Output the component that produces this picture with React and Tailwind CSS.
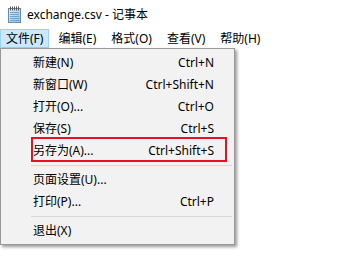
const font = { fontFamily: '"Noto Sans", "Noto Sans CJK SC", sans-serif' }

const NotepadIcon = () => (
  <svg width="15" height="17" viewBox="0 0 15 17">
    <defs>
      <linearGradient id="pad" x1="0" y1="0" x2="1" y2="1">
        <stop offset="0" stopColor="#e4f2fc" />
        <stop offset="1" stopColor="#8fc0e4" />
      </linearGradient>
    </defs>
    <rect x="1.5" y="2.5" width="12" height="14" fill="url(#pad)" stroke="#5b8db8" />
    {[3, 5, 7, 9, 11].map((x) => (
      <rect key={x} x={x} y="0.5" width="1" height="4" fill="#555" />
    ))}
    {[6, 8, 10, 12, 14].map((y) => (
      <line key={y} x1="3" y1={y + 0.5} x2="12" y2={y + 0.5} stroke="#6fa3cf" strokeWidth="1" />
    ))}
  </svg>
)

const items = [
  { label: '新建(N)', key: 'Ctrl+N' },
  { label: '新窗口(W)', key: 'Ctrl+Shift+N' },
  { label: '打开(O)...', key: 'Ctrl+O' },
  { label: '保存(S)', key: 'Ctrl+S' },
  { label: '另存为(A)...', key: 'Ctrl+Shift+S', marked: true },
  'sep',
  { label: '页面设置(U)...', key: '' },
  { label: '打印(P)...', key: 'Ctrl+P' },
  'sep',
  { label: '退出(X)', key: '' }
]

const App = () => {
  return (
    <div className="relative w-[363px] h-[266px] bg-white text-black overflow-hidden text-[12px]" style={font}>
      {/* Title bar */}
      <div className="flex items-center h-[29px] pl-[7px] gap-[5px]">
        <NotepadIcon />
        <span className="text-[12px] leading-none">exchange.csv - 记事本</span>
      </div>

      {/* Menu bar */}
      <div className="flex h-[19px] items-stretch gap-[3px]">
        {['文件(F)', '编辑(E)', '格式(O)', '查看(V)', '帮助(H)'].map((m, i) => (
          <div
            key={m}
            className={
              i === 0
                ? 'flex items-center px-[5px] border border-[#99d1ff] bg-[#cce8ff]'
                : 'flex items-center px-[5px] border border-transparent'
            }
          >
            {m}
          </div>
        ))}
      </div>

      {/* File menu */}
      <div className="absolute left-0 top-[48px] w-[235px] border border-[#999999] bg-[#f2f2f2] pt-[3px] pb-[2px] shadow-[2px_2px_3px_rgba(0,0,0,0.4)]">
        {items.map((it, idx) =>
          it === 'sep' ? (
            <div key={idx} className="h-[7px] flex items-center">
              <div className="ml-[30px] mr-[2px] flex-1 h-px bg-[#d7d7d7]" />
            </div>
          ) : (
            <div key={idx} className="relative h-[22px] flex items-center justify-between pl-[32px] pr-[20px]">
              <span>{it.label}</span>
              <span>{it.key}</span>
              {it.marked && (
                <div className="absolute left-[30px] top-[-3px] w-[196px] h-[25px] border-2 border-[#e81123]" />
              )}
            </div>
          )
        )}
      </div>
    </div>
  )
}

export default App
